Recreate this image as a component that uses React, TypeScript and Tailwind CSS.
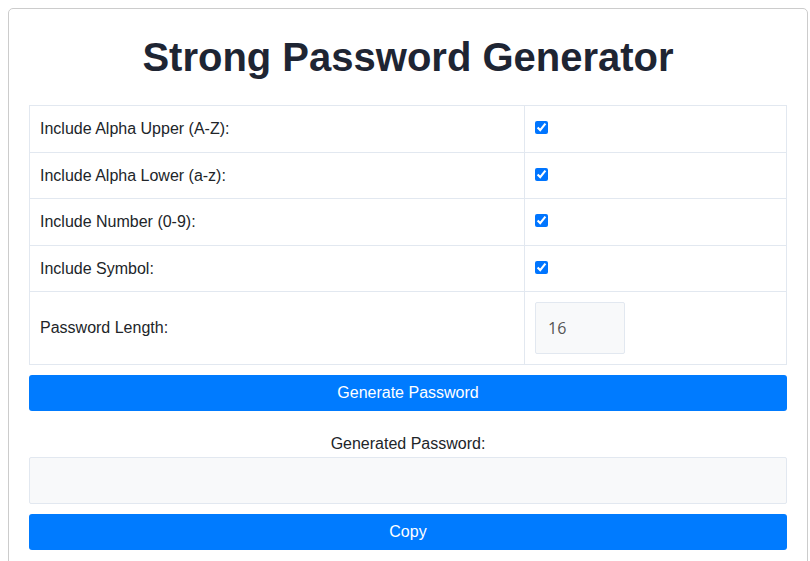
import React from "react";

const rows = [
  { label: "Include Alpha Upper (A-Z):", h: "h-[46px]" },
  { label: "Include Alpha Lower (a-z):", h: "h-[45px]" },
  { label: "Include Number (0-9):", h: "h-[46px]" },
  { label: "Include Symbol:", h: "h-[45px]" },
];

export default function App() {
  return (
    <div className="min-h-[561px] bg-white pt-2 pl-2" style={{ fontFamily: '"Liberation Sans", Arial, sans-serif' }}>
      <div className="w-[800px] min-h-[600px] rounded-[5px] border border-[#cccccc] bg-white px-5 pt-5 text-[16px] text-[#212529]">
        <h1 className="mt-[5px] mb-[25px] h-[46px] text-center text-[40px] font-bold leading-[46px] text-[#1e2533]">
          Strong Password Generator
        </h1>
        <div className="border border-[#e2e8f0]">
          {rows.map((r, i) => (
            <div key={i} className={`grid grid-cols-[495px_1fr] ${i > 0 ? "border-t border-[#e2e8f0]" : ""}`}>
              <div className={`flex ${r.h} items-center border-r border-[#e2e8f0] pl-[10px]`}>{r.label}</div>
              <div className={`flex ${r.h} items-center pl-[10px]`}>
                <input type="checkbox" defaultChecked className="m-0 mb-[3px] h-[13px] w-[13px] accent-[#0075ff]" />
              </div>
            </div>
          ))}
          <div className="grid grid-cols-[495px_1fr] border-t border-[#e2e8f0]">
            <div className="flex h-[72px] items-center border-r border-[#e2e8f0] pl-[10px]">Password Length:</div>
            <div className="flex h-[72px] items-center pl-[10px]">
              <div
                className="flex h-[52px] w-[90px] items-center rounded-[2px] border border-[#e2e8f0] bg-[#f8f9fa] pl-[12px] text-[16px] text-[#555]"
                style={{ fontFamily: '"Open Sans", sans-serif' }}
              >
                16
              </div>
            </div>
          </div>
        </div>
        <button className="mt-[10px] flex h-[36px] w-full items-center justify-center rounded-[3px] bg-[#007bff] text-[16px] text-white">
          Generate Password
        </button>
        <div className="mt-[24px] text-center leading-[18px]">Generated Password:</div>
        <div className="mt-[4px] h-[47px] w-full rounded-[2px] border border-[#e2e8f0] bg-[#f8f9fa]"></div>
        <button className="mt-[10px] flex h-[36px] w-full items-center justify-center rounded-[3px] bg-[#007bff] text-[16px] text-white">
          Copy
        </button>
      </div>
    </div>
  );
}
